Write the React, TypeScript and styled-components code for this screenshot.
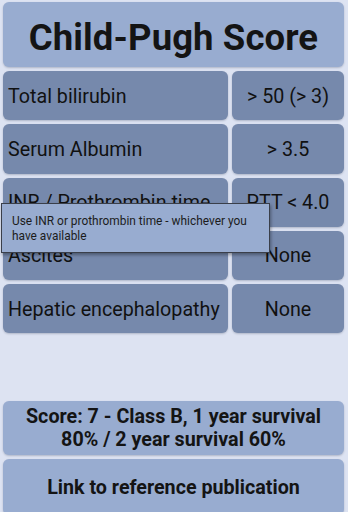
import React from "react";
import styled, { createGlobalStyle } from "styled-components";

const Global = createGlobalStyle`
  html, body { margin: 0; padding: 0; background: #dde3f2; }
  body { font-family: Roboto, "Noto Sans", "Liberation Sans", sans-serif; color: #111; }
  * { box-sizing: border-box; }
`;

const Page = styled.div`
  position: relative;
  height: 512px;
  overflow: hidden;
  display: flex;
  flex-direction: column;
  padding: 2px 4px 0 3px;
`;

const Header = styled.div`
  height: 65px;
  background: #98acd0;
  border-radius: 6px;
  box-shadow: 0 1px 2px rgba(40, 50, 80, 0.25);
  display: flex;
  align-items: center;
  justify-content: center;
  padding-top: 5px;
`;

const Title = styled.h1`
  margin: 0;
  font-size: 36.5px;
  font-weight: 700;
  color: #141414;
  letter-spacing: 0.1px;
`;

const Rows = styled.div`
  margin-top: 4px;
  display: grid;
  grid-template-columns: 225px 112px;
  grid-auto-rows: 49.25px;
  column-gap: 4px;
  row-gap: 4px;
`;

const Cell = styled.div<{ $align: "left" | "center" }>`
  background: #7689ac;
  border-radius: 6px;
  box-shadow: 0 1px 2px rgba(40, 50, 80, 0.25);
  display: flex;
  align-items: center;
  justify-content: ${(p) => (p.$align === "left" ? "flex-start" : "center")};
  padding-left: ${(p) => (p.$align === "left" ? "5px" : "0")};
  padding-top: 1px;
  font-size: 19.7px;
  color: #111;
  white-space: nowrap;
  overflow: hidden;
`;

const Bottom = styled.div`
  margin-top: auto;
  display: flex;
  flex-direction: column;
  gap: 4px;
  margin-bottom: -3px;
`;

const ResultCard = styled.div<{ $h: number }>`
  height: ${(p) => p.$h}px;
  background: #98acd0;
  border-radius: 6px;
  box-shadow: 0 1px 2px rgba(40, 50, 80, 0.25);
  display: flex;
  align-items: center;
  justify-content: center;
  text-align: center;
  font-size: 19.7px;
  font-weight: 700;
  line-height: 23px;
  color: #141414;
  padding: 0 12px;
`;

const Tooltip = styled.div`
  position: absolute;
  left: 1px;
  top: 203px;
  width: 269px;
  height: 50px;
  background: #98acd0;
  border: 1px solid #3a3f4a;
  box-shadow: 1px 2px 3px rgba(0, 0, 0, 0.35);
  padding: 10px 6px 0 10px;
  font-size: 11.9px;
  line-height: 15px;
  color: #1c1c1c;
`;

const rows: [string, string][] = [
  ["Total bilirubin", "> 50 (> 3)"],
  ["Serum Albumin", "> 3.5"],
  ["INR / Prothrombin time", "PTT < 4.0"],
  ["Ascites", "None"],
  ["Hepatic encephalopathy", "None"],
];

export default function App() {
  return (
    <>
      <Global />
      <Page>
        <Header>
          <Title>Child-Pugh Score</Title>
        </Header>
        <Rows>
          {rows.map(([label, value]) => (
            <React.Fragment key={label}>
              <Cell $align="left">{label}</Cell>
              <Cell $align="center">{value}</Cell>
            </React.Fragment>
          ))}
        </Rows>
        <Bottom>
          <ResultCard $h={54}>
            Score: 7 - Class B, 1 year survival 80% / 2 year survival 60%
          </ResultCard>
          <ResultCard $h={56}>Link to reference publication</ResultCard>
        </Bottom>
        <Tooltip>Use INR or prothrombin time - whichever you have available</Tooltip>
      </Page>
    </>
  );
}
